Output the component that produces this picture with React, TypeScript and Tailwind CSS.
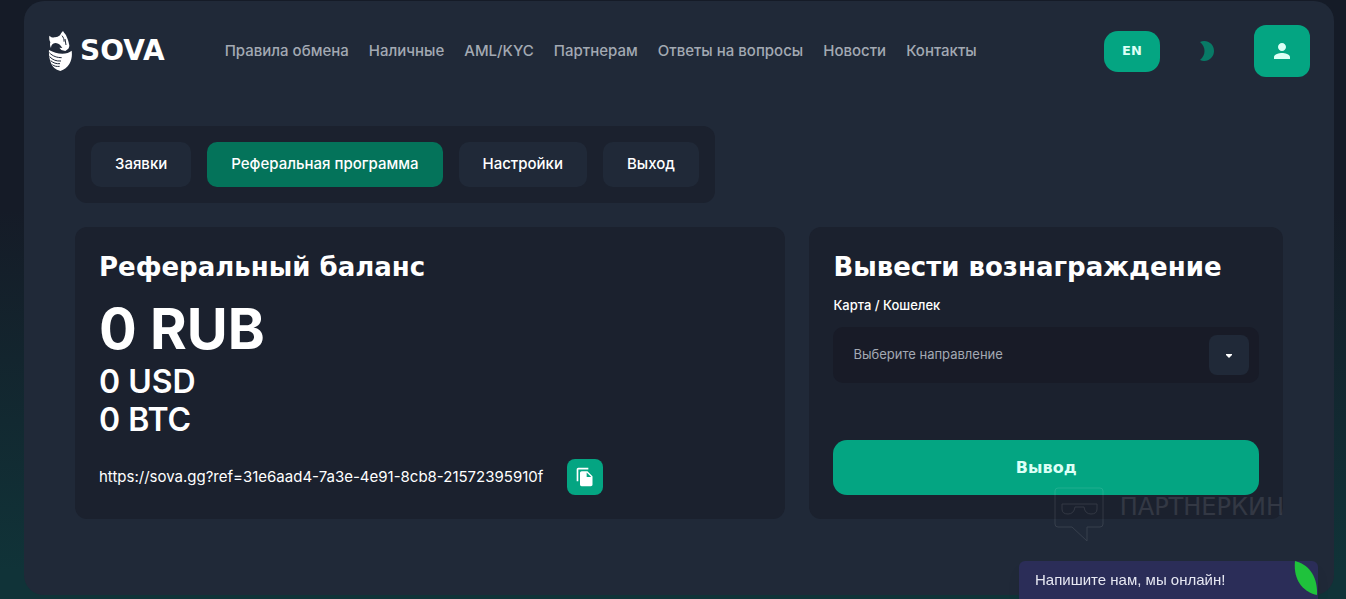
import { ReactNode } from 'react';
import { MdFileCopy, MdPerson } from 'react-icons/md';

interface NavItem {
  text: string;
  url: string;
}

const navItems: NavItem[] = [
  { text: 'Правила обмена', url: '#rules' },
  { text: 'Наличные', url: '#cash' },
  { text: 'AML/KYC', url: '#aml' },
  { text: 'Партнерам', url: '#partners' },
  { text: 'Ответы на вопросы', url: '#faq' },
  { text: 'Новости', url: '#news' },
  { text: 'Контакты', url: '#contacts' },
];

const tabs = ['Заявки', 'Реферальная программа', 'Настройки', 'Выход'];

const refLink = 'https://sova.gg?ref=31e6aad4-7a3e-4e91-8cb8-21572395910f';

function Logo() {
  return (
    <a href="#home" className="flex items-center gap-2">
      <svg viewBox="0 0 72 120" className="h-10 w-6" fill="#fff">
        <path d="M4 14c5 5 11 6 17 5 6-1 10-2 15-6 2-5 5-9 9-13 3 6 9 10 11 17 3 7 6 14 7 22 2 5 1 9-2 14l-9 7-12-3-6-7 9 1-5-7c-4-5-10-8-16-8-8 1-13 6-13 15-3-6-4-11-2-17-3-6-4-13-3-20Z" />
        <path d="M42 14c4 5 7 11 6 18M51 24l3 18" stroke="#202938" strokeWidth="3" fill="none" />
        <path d="M3 57c13 7 26 11 40 11 12 0 21-3 28-9 2 15 0 28-7 40-6 10-15 17-27 21-15-4-24-12-28-24C4 83 2 70 3 57Z" />
        <path
          d="M4 65c10 11 24 15 37 15M5 77c9 10 20 14 34 13M8 89c8 7 17 10 28 9M13 101c6 5 13 6 22 5"
          stroke="#202938"
          strokeWidth="3"
          fill="none"
        />
      </svg>
      <span className="font-['DejaVu_Sans'] text-[28px] leading-8 font-bold text-white">SOVA</span>
    </a>
  );
}

function Header() {
  return (
    <header className="flex items-center justify-between px-6 pt-6">
      <div className="flex items-center gap-15">
        <Logo />
        <nav className="flex gap-5">
          {navItems.map(({ text, url }) => (
            <a key={url} href={url} className="text-[15px] font-medium whitespace-nowrap text-[#a3a9b3]">
              {text}
            </a>
          ))}
        </nav>
      </div>

      <div className="flex items-center">
        <button className="h-[41px] w-14 rounded-[14px] bg-[#04a582] font-['DejaVu_Sans'] text-[13px] font-bold text-[#dcfff6]">
          EN
        </button>
        <button aria-label="Тема" className="mx-9 flex w-[22px] justify-center">
          <svg viewBox="0 0 16 22" className="h-[22px] w-4" fill="#087a66">
            <path d="M1 2C8-1 15 4 15 11S8 23 1 20c6-5 6-13 0-18Z" />
          </svg>
        </button>
        <button
          aria-label="Профиль"
          className="flex h-[52px] w-14 items-center justify-center rounded-xl bg-[#04a582] text-[#dcfff6]"
        >
          <MdPerson className="h-6 w-6" />
        </button>
      </div>
    </header>
  );
}

function Tabs() {
  return (
    <div className="flex w-fit gap-4 rounded-xl bg-[#1b212e] p-4">
      {tabs.map((tab) => (
        <button
          key={tab}
          className={`h-[45px] rounded-[10px] px-6 text-[15px] font-medium text-white ${
            tab === 'Реферальная программа' ? 'bg-[#04735a]' : 'bg-[#202938]'
          }`}
        >
          {tab}
        </button>
      ))}
    </div>
  );
}

function Panel({ title, children }: { title: string; children: ReactNode }) {
  return (
    <section className="flex flex-col rounded-xl bg-[#1b212e] p-6">
      <h2 className="font-['DejaVu_Sans'] text-[26px] leading-8 font-bold whitespace-nowrap text-white">
        {title}
      </h2>
      {children}
    </section>
  );
}

function Balance() {
  return (
    <Panel title="Реферальный баланс">
      <p className="mt-3 text-[56px] leading-[68px] font-bold text-white">0 RUB</p>
      <p className="text-[32px] leading-[38px] font-semibold text-white">0 USD</p>
      <p className="text-[32px] leading-[38px] font-semibold text-white">0 BTC</p>
      <div className="mt-5 flex items-center gap-6">
        <span className="text-[15px] text-white">{refLink}</span>
        <button
          aria-label="Скопировать"
          className="flex h-9 w-9 items-center justify-center rounded-lg bg-[#04a582] text-white"
        >
          <MdFileCopy className="h-5 w-5" />
        </button>
      </div>
    </Panel>
  );
}

function Withdraw() {
  return (
    <Panel title="Вывести вознаграждение">
      <label htmlFor="direction" className="mt-3 text-[13px] leading-5 font-medium text-white">
        Карта / Кошелек
      </label>
      <div className="relative mt-3">
        <select
          id="direction"
          className="h-14 w-full appearance-none rounded-[10px] bg-[#181b27] px-5 text-[13px] text-[#a3a9b3]"
        >
          <option>Выберите направление</option>
        </select>
        <span className="pointer-events-none absolute top-2 right-2.5 flex h-10 w-10 items-center justify-center rounded-lg bg-[#202938]">
          <svg viewBox="0 0 6 5" className="h-[5px] w-1.5" fill="#fff">
            <path d="M0 1h6v1L3 5 0 2Z" />
          </svg>
        </span>
      </div>
      <button className="mt-auto h-[55px] rounded-[14px] bg-[#04a582] font-['DejaVu_Sans'] text-base font-bold text-[#dcfff6]">
        Вывод
      </button>
    </Panel>
  );
}

function Watermark() {
  return (
    <div className="pointer-events-none absolute right-[50px] bottom-[52px] flex items-start gap-4 text-white opacity-10">
      <svg viewBox="0 0 50 56" className="h-14 w-[50px]" fill="none" stroke="currentColor" strokeWidth="1">
        <path d="M4 1h42q3 0 3 3v33q0 3-3 3H33v14L18 40H4q-3 0-3-3V4q0-3 3-3Z" />
        <path d="M8 17h35v5q0 5-6 5t-7-7h-9q-1 7-7 7t-6-5Z" />
      </svg>
      <span className="font-['DejaVu_Sans'] text-2xl leading-10">ПАРТНЕРКИН</span>
    </div>
  );
}

function Chat() {
  return (
    <button className="fixed right-7 bottom-0 h-[38px] w-[299px] rounded-t-md bg-[#2b2d58] px-4 text-left font-['Liberation_Sans'] text-[15px] text-[#e6e7f2] shadow-lg">
      Напишите нам, мы онлайн!
      <svg viewBox="0 0 24 34" className="absolute top-0 right-0 h-[34px] w-6" fill="#1fc23c">
        <path d="M1 0c13 3 23 15 22 34C9 31-1 19 1 0Z" />
      </svg>
    </button>
  );
}

export default function App() {
  return (
    <div className="flex min-h-screen flex-col bg-[linear-gradient(#151b27_35%,#103338_95%)] pt-px pr-3 pb-[5px] pl-6 font-['Inter',sans-serif]">
      <main className="relative flex-1 rounded-[20px] bg-[#202938] pb-19">
        <Header />
        <div className="px-[51px] pt-[49px]">
          <Tabs />
          <div className="mt-6 grid grid-cols-[3fr_2fr] gap-6">
            <Balance />
            <Withdraw />
          </div>
        </div>
        <Watermark />
      </main>
      <Chat />
    </div>
  );
}
